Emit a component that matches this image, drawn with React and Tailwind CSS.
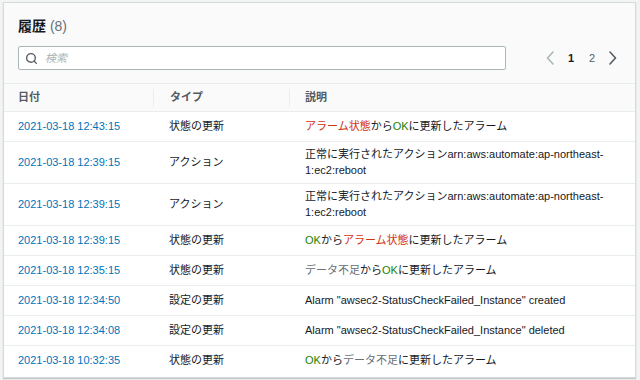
import React from 'react';
import { Search } from 'lucide-react';

const RED = 'text-[#d13212]';
const GREEN = 'text-[#1d8102]';
const MUTED = 'text-[#687078]';

const rows = [
  {
    date: '2021-03-18 12:43:15',
    type: '状態の更新',
    desc: (
      <>
        <span className={RED}>アラーム状態</span>から<span className={GREEN}>OK</span>に更新したアラーム
      </>
    ),
  },
  {
    date: '2021-03-18 12:39:15',
    type: 'アクション',
    desc: (
      <>
        正常に実行されたアクションarn:aws:automate:ap-northeast-<wbr />1:ec2:reboot
      </>
    ),
  },
  {
    date: '2021-03-18 12:39:15',
    type: 'アクション',
    desc: (
      <>
        正常に実行されたアクションarn:aws:automate:ap-northeast-<wbr />1:ec2:reboot
      </>
    ),
  },
  {
    date: '2021-03-18 12:39:15',
    type: '状態の更新',
    desc: (
      <>
        <span className={GREEN}>OK</span>から<span className={RED}>アラーム状態</span>に更新したアラーム
      </>
    ),
  },
  {
    date: '2021-03-18 12:35:15',
    type: '状態の更新',
    desc: (
      <>
        <span className={MUTED}>データ不足</span>から<span className={GREEN}>OK</span>に更新したアラーム
      </>
    ),
  },
  {
    date: '2021-03-18 12:34:50',
    type: '設定の更新',
    desc: 'Alarm "awsec2-StatusCheckFailed_Instance" created',
  },
  {
    date: '2021-03-18 12:34:08',
    type: '設定の更新',
    desc: 'Alarm "awsec2-StatusCheckFailed_Instance" deleted',
  },
  {
    date: '2021-03-18 10:32:35',
    type: '状態の更新',
    desc: (
      <>
        <span className={GREEN}>OK</span>から<span className={MUTED}>データ不足</span>に更新したアラーム
      </>
    ),
  },
];

function Chevron({ dir, className }) {
  return (
    <svg width="8" height="14" viewBox="0 0 8 14" className={className}>
      <polyline
        points={dir === 'left' ? '7,1 1.5,7 7,13' : '1,1 6.5,7 1,13'}
        fill="none"
        stroke="currentColor"
        strokeWidth="1.6"
        strokeLinecap="round"
        strokeLinejoin="round"
      />
    </svg>
  );
}

export default function App() {
  return (
    <div
      className="w-[640px] h-[380px] bg-[#f2f3f3] pt-[2px] pl-[3px] pr-[4px] pb-[2px] text-[11px] text-[#16191f]"
      style={{ fontFamily: '"Liberation Sans", "Noto Sans CJK JP", sans-serif' }}
    >
      <div className="h-full border border-[#d5dbdb] bg-white shadow-[0_1px_1px_0_rgba(0,28,36,0.2)] overflow-hidden">
        {/* ヘッダー */}
        <div className="bg-[#fafafa] px-[14px] pt-[13px] pb-[13px]">
          <h2 className="text-[14px] leading-[20px] font-bold text-[#16191f]">
            履歴 <span className="font-normal text-[#687078]">(8)</span>
          </h2>
          <div className="mt-[10px] flex items-center">
            <div className="flex-1 h-[24px] flex items-center bg-white border border-[#aab7b8] rounded-[2px] pl-[6px]">
              <Search className="w-[13px] h-[13px] text-[#545b64]" strokeWidth={2.5} />
              <span className="ml-[7px] italic text-[#aab7b8]">検索</span>
            </div>
            <div className="ml-[36px] flex items-center gap-[5px]">
              <span className="w-[16px] flex justify-center">
                <Chevron dir="left" className="text-[#aab7b8]" />
              </span>
              <span className="w-[16px] text-center font-bold text-[#16191f]">1</span>
              <span className="w-[16px] text-center text-[#545b64]">2</span>
              <span className="w-[16px] flex justify-center">
                <Chevron dir="right" className="text-[#545b64]" />
              </span>
            </div>
          </div>
        </div>

        {/* テーブル */}
        <div className="grid grid-cols-[135px_136px_1fr] px-[14px] h-[29px] bg-[#fafafa] border-t border-b border-[#eaeded] font-bold text-[#545b64]">
          <div className="flex items-center">日付</div>
          <div className="flex items-center">
            <div className="w-px h-[18px] bg-[#eaeded]" />
            <span className="ml-[16px]">タイプ</span>
          </div>
          <div className="flex items-center">
            <div className="w-px h-[18px] bg-[#eaeded]" />
            <span className="ml-[15px]">説明</span>
          </div>
        </div>
        {rows.map((row, i) => (
          <div
            key={i}
            className={`grid grid-cols-[135px_136px_1fr] px-[14px] min-h-[30px] py-[5px] leading-[15.5px] items-center ${
              i < rows.length - 1 ? 'border-b border-[#eaeded]' : ''
            }`}
          >
            <div className="text-[#0073bb]">{row.date}</div>
            <div className="pl-[16px] text-[#16191f]">{row.type}</div>
            <div className="pl-[16px] pr-[10px] text-[#16191f]">{row.desc}</div>
          </div>
        ))}
      </div>
    </div>
  );
}
